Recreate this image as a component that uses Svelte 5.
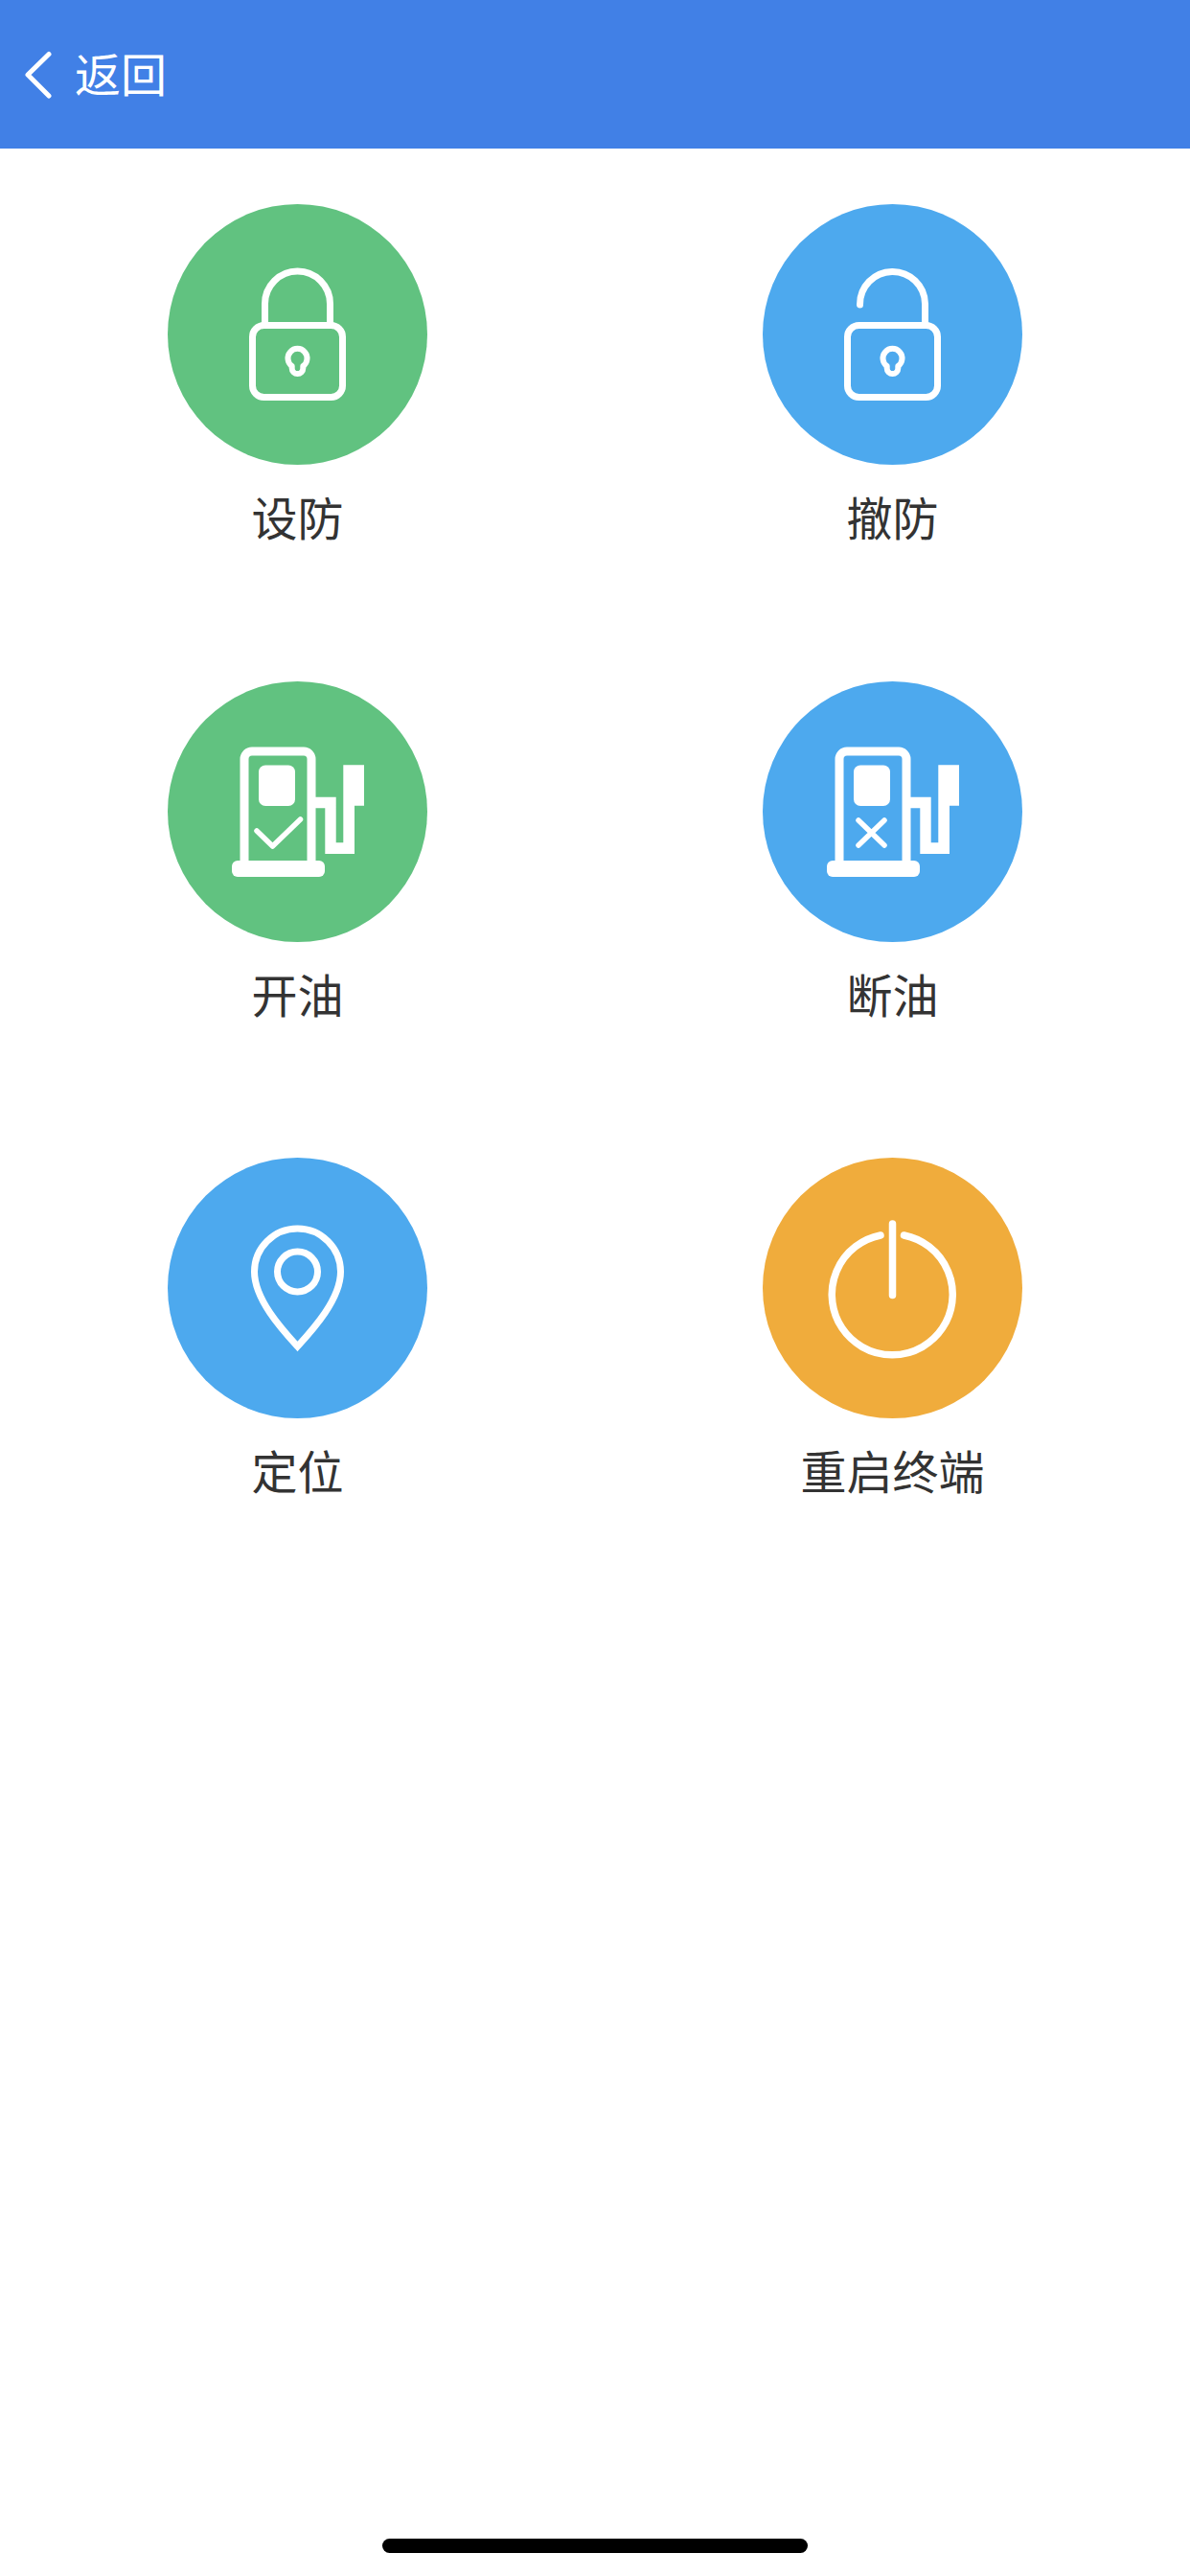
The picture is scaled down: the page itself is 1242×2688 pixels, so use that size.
<script>
    const items = [
        { label: "设防", icon: "locked", color: "green" },
        { label: "撤防", icon: "unlocked", color: "blue" },
        { label: "开油", icon: "fuelOn", color: "green" },
        { label: "断油", icon: "fuelOff", color: "blue" },
        { label: "定位", icon: "pin", color: "blue" },
        { label: "重启终端", icon: "power", color: "orange" },
    ];
</script>

<div class="page">
    <header class="topbar">
        <svg class="back" viewBox="0 0 30 52" width="30" height="52">
            <path d="M27 4.500 L5 26 L27 48" />
        </svg>
        <span class="back-text">返回</span>
    </header>

    <main class="grid">
        {#each items as item}
            <div class="cell">
                <div class="circle {item.color}">
                    <svg viewBox="0 0 272 272" width="272" height="272">
                        {#if item.icon === "locked" || item.icon === "unlocked"}
                            <rect class="line" x="88.500" y="126.500" width="94" height="75" rx="12" />
                            {#if item.icon === "locked"}
                                <path class="line" d="M101.500 124 V104 A34 34 0 0 1 169.500 104 V124" />
                            {:else}
                                <path class="line round" d="M101.500 105 A34 34 0 0 1 169.500 104 V124" />
                            {/if}
                            <path class="key" d="M129.700 169 A10 10 0 1 1 141.300 169 V171.200 A5.800 5.800 0 0 1 129.700 171.200 Z" />
                        {:else if item.icon === "fuelOn" || item.icon === "fuelOff"}
                            <path class="body" d="M80 188 V81 a8 8 0 0 1 8 -8 h54 a8 8 0 0 1 8 8 V188" />
                            <rect class="solid" x="67" y="187" width="97" height="17" rx="6" />
                            <rect class="solid" x="95" y="87.500" width="38" height="42.500" rx="7" />
                            <polygon class="solid" points="154,120.700 175.700,120.700 175.700,168.300 183.300,168.300 183.300,87.300 205,87.300 205,129.700 195,129.700 195,180 164.300,180 164.300,132.300 154,132.300" />
                            {#if item.icon === "fuelOn"}
                                <path class="mark" d="M93 156 L109.500 172 L138.500 144" />
                            {:else}
                                <path class="mark" d="M100 145 L127 171 M127 145 L100 171" />
                            {/if}
                        {:else if item.icon === "pin"}
                            <path class="line" d="M135.500 197 C120 180 90.500 148 90.500 119 A45 45 0 0 1 180.500 119 C180.500 148 151 180 135.500 197 Z" />
                            <circle class="line" cx="135.500" cy="119" r="21" />
                        {:else}
                            <path class="ring" d="M123 81 A63 63 0 1 0 147.500 81" />
                            <path class="stem" d="M135.500 69 V143.500" />
                        {/if}
                    </svg>
                </div>
                <div class="label">{item.label}</div>
            </div>
        {/each}
    </main>

    <div class="home-bar"></div>
</div>

<style>
    :global(body) {
        margin: 0;
        background: #fff;
    }

    .page {
        position: relative;
        width: 1242px;
        height: 2688px;
        background: #fff;
        overflow: hidden;
        font-family: "Noto Sans CJK SC", "Noto Sans", sans-serif;
    }

    .topbar {
        height: 155px;
        background: #4180e6;
        display: flex;
        align-items: center;
        padding-left: 24px;
        box-sizing: border-box;
    }

    .back {
        fill: none;
        stroke: #fff;
        stroke-width: 5;
        stroke-linecap: round;
        stroke-linejoin: round;
    }

    .back-text {
        margin-left: 24px;
        margin-bottom: 6px;
        font-size: 48px;
        line-height: 48px;
        color: #fff;
    }

    .grid {
        display: grid;
        grid-template-columns: 1fr 1fr;
        grid-auto-rows: 497.500px;
        padding-top: 58px;
    }

    .cell {
        display: flex;
        flex-direction: column;
        align-items: center;
    }

    .circle {
        width: 271px;
        height: 272px;
        border-radius: 50%;
    }

    .circle svg {
        display: block;
    }

    .green {
        background: #61c280;
    }

    .blue {
        background: #4da9ee;
    }

    .orange {
        background: #f0ac3c;
    }

    .line {
        fill: none;
        stroke: #fff;
        stroke-width: 7;
    }

    .round {
        stroke-linecap: round;
    }

    .ring {
        fill: none;
        stroke: #fff;
        stroke-width: 7.500;
        stroke-linecap: round;
    }

    .key {
        fill: none;
        stroke: #fff;
        stroke-width: 6;
        stroke-linejoin: round;
    }

    .body {
        fill: none;
        stroke: #fff;
        stroke-width: 9;
    }

    .solid {
        fill: #fff;
    }

    .mark {
        fill: none;
        stroke: #fff;
        stroke-width: 5.500;
        stroke-linecap: round;
        stroke-linejoin: round;
    }

    .stem {
        fill: none;
        stroke: #fff;
        stroke-width: 7.500;
        stroke-linecap: round;
    }

    .label {
        margin-top: 20px;
        font-size: 48px;
        line-height: 66px;
        color: #333;
    }

    .home-bar {
        position: absolute;
        left: 399px;
        bottom: 24px;
        width: 444px;
        height: 15px;
        border-radius: 8px;
        background: #000;
    }
</style>
